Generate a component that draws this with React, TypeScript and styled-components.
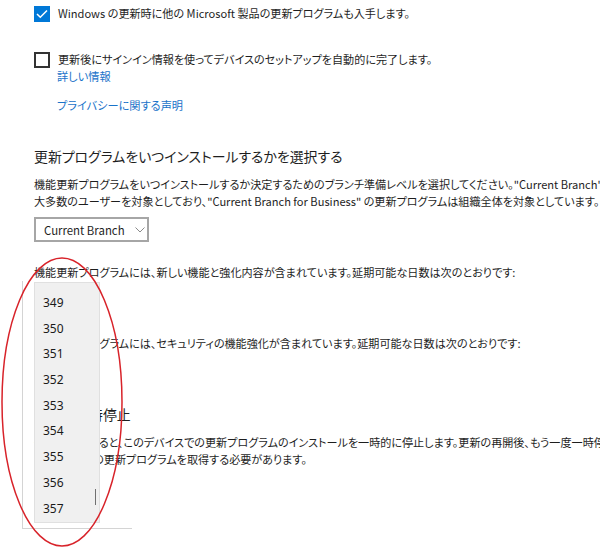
import React from "react";
import styled, { createGlobalStyle } from "styled-components";

const GlobalStyle = createGlobalStyle`
    html, body {
        margin: 0;
        padding: 0;
        background: #ffffff;
        overflow: hidden;
    }
    body {
        font-family: "Noto Sans CJK JP", "Noto Sans", sans-serif;
        font-feature-settings: "palt";
        color: #1e1e1e;
    }
`;

const Page = styled.div`
    position: relative;
    width: 600px;
    height: 547px;
    overflow: hidden;
    padding-left: 34px;
    box-sizing: border-box;
`;

const CheckRow = styled.label<{ $top: number }>`
    display: flex;
    align-items: center;
    gap: 8px;
    margin-top: ${(p) => p.$top}px;
    height: 17px;
`;

const Box = styled.span<{ $checked?: boolean }>`
    display: flex;
    align-items: center;
    justify-content: center;
    width: 16px;
    height: 16px;
    box-sizing: border-box;
    flex: none;
    background: ${(p) => (p.$checked ? "#0078d7" : "#ffffff")};
    border: ${(p) => (p.$checked ? "none" : "2px solid #333333")};
`;

const Text = styled.div<{ $top?: number }>`
    font-size: 11.1px;
    line-height: 17px;
    white-space: nowrap;
    margin-top: ${(p) => p.$top ?? 0}px;
`;

const Link = styled.a<{ $top?: number; $indent?: number }>`
    display: block;
    font-size: 11.2px;
    line-height: 17px;
    color: #1a73c9;
    text-decoration: none;
    margin-top: ${(p) => p.$top ?? 0}px;
    margin-left: ${(p) => p.$indent ?? 0}px;
`;

const Heading = styled.h2<{ $top: number }>`
    font-size: 13.9px;
    font-weight: 400;
    line-height: 22px;
    margin: ${(p) => p.$top}px 0 0 0;
    white-space: nowrap;
`;

const Paragraph = styled.div<{ $top: number }>`
    margin-top: ${(p) => p.$top}px;
`;

const Select = styled.div<{ $top?: number; $width: number }>`
    display: flex;
    align-items: center;
    gap: 10px;
    box-sizing: border-box;
    width: ${(p) => p.$width}px;
    height: 25px;
    margin-top: ${(p) => p.$top ?? 0}px;
    padding: 0 6px 0 8px;
    border: 2px solid #a6a6a6;
    font-size: 11.4px;
    white-space: nowrap;
    color: #1e1e1e;

    svg {
        margin-left: auto;
        flex: none;
    }
`;

const DeferField = styled.div<{ $height: number }>`
    position: relative;
    box-sizing: border-box;
    height: ${(p) => p.$height}px;
    padding-top: 8px;
`;

const Popup = styled.div`
    position: absolute;
    top: 0;
    left: -12px;
    width: 110px;
    height: 248px;
    box-sizing: border-box;
    border-left: 1px solid #d4d4d4;
    border-bottom: 1px solid #d4d4d4;
    z-index: 2;
`;

const List = styled.ul`
    position: relative;
    list-style: none;
    margin: 1px 0 0 11px;
    padding: 7px 0 0 0;
    width: 66px;
    height: 241px;
    box-sizing: border-box;
    background: #f0f0f0;
    border: 1px solid #e0e0e0;
`;

const Item = styled.li`
    height: 25.7px;
    line-height: 25.7px;
    padding-left: 8px;
    font-family: "Noto Sans", sans-serif;
    font-size: 12px;
    color: #1a1a1a;
`;

const Thumb = styled.span`
    position: absolute;
    right: 3px;
    top: 206px;
    width: 1.5px;
    height: 16px;
    background: #707070;
`;

const Annotation = styled.svg`
    position: absolute;
    left: 0;
    top: 0;
    pointer-events: none;
    z-index: 3;
`;

const Chevron = () => (
    <svg width="10" height="6" viewBox="0 0 10 6">
        <polyline points="0.5,0.5 5,5 9.5,0.5" fill="none" stroke="#8a8a8a" strokeWidth="1" />
    </svg>
);

const Check = () => (
    <svg width="12" height="10" viewBox="0 0 12 10">
        <polyline points="1,5 4.3,8.3 11,1.5" fill="none" stroke="#ffffff" strokeWidth="1.5" />
    </svg>
);

const days = [349, 350, 351, 352, 353, 354, 355, 356, 357];

export default function App() {
    return (
        <>
            <GlobalStyle />
            <Page>
                <CheckRow $top={5}>
                    <Box $checked>
                        <Check />
                    </Box>
                    <Text>Windows の更新時に他の Microsoft 製品の更新プログラムも入手します。</Text>
                </CheckRow>

                <CheckRow $top={29}>
                    <Box />
                    <Text>更新後にサインイン情報を使ってデバイスのセットアップを自動的に完了します。</Text>
                </CheckRow>
                <Link href="#" $indent={23}>詳しい情報</Link>
                <Link href="#" $top={12} $indent={23}>プライバシーに関する声明</Link>

                <Heading $top={31}>更新プログラムをいつインストールするかを選択する</Heading>
                <Paragraph $top={9}>
                    <Text>
                        機能更新プログラムをいつインストールするか決定するためのブランチ準備レベルを選択してください。"Current Branch" の更新プログラムは
                    </Text>
                    <Text>
                        大多数のユーザーを対象としており、"Current Branch for Business" の更新プログラムは組織全体を対象としています。
                    </Text>
                </Paragraph>
                <Select $top={7} $width={115}>
                    <span>Current Branch</span>
                    <Chevron />
                </Select>

                <Text $top={22}>機能更新プログラムには、新しい機能と強化内容が含まれています。延期可能な日数は次のとおりです:</Text>
                <DeferField $height={54}>
                    <Select $width={62}>
                        <span>349</span>
                        <Chevron />
                    </Select>
                    <Popup>
                        <List>
                            {days.map((d) => (
                                <Item key={d}>{d}</Item>
                            ))}
                            <Thumb />
                        </List>
                    </Popup>
                </DeferField>
                <Text>品質更新プログラムには、セキュリティの機能強化が含まれています。延期可能な日数は次のとおりです:</Text>
                <DeferField $height={40}>
                    <Select $width={62}>
                        <span>0</span>
                        <Chevron />
                    </Select>
                </DeferField>

                <Heading $top={11}>更新の一時停止</Heading>
                <Paragraph $top={9}>
                    <Text>
                        一時停止をすると、このデバイスでの更新プログラムのインストールを一時的に停止します。更新の再開後、もう一度一時停止す
                    </Text>
                    <Text>る前に、最新の更新プログラムを取得する必要があります。</Text>
                </Paragraph>

                <Annotation width="600" height="547" viewBox="0 0 600 547">
                    <ellipse cx="62" cy="402" rx="60" ry="144" fill="none" stroke="#d8232a" strokeWidth="1.5" />
                </Annotation>
            </Page>
        </>
    );
}
